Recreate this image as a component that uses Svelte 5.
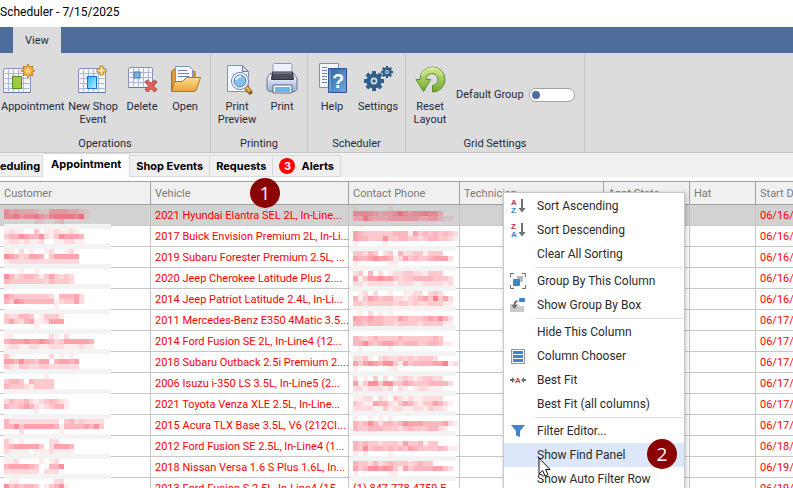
<script>
  let defaultGroup = false

  const columns = ['Customer', 'Vehicle', 'Contact Phone', 'Technician', 'Appt State', 'Hat', 'Start Date']

  const rows = [
    { vehicle: '2021 Hyundai Elantra SEL 2L, In-Line...', start: '06/16/2025' },
    { vehicle: '2017 Buick Envision Premium 2L, In-Li...', start: '06/16/2025' },
    { vehicle: '2019 Subaru Forester Premium 2.5L, ...', start: '06/16/2025' },
    { vehicle: '2020 Jeep Cherokee Latitude Plus 2....', start: '06/16/2025' },
    { vehicle: '2014 Jeep Patriot Latitude 2.4L, In-Li...', start: '06/16/2025' },
    { vehicle: '2011 Mercedes-Benz E350 4Matic 3.5...', start: '06/17/2025' },
    { vehicle: '2014 Ford Fusion SE 2L, In-Line4 (12...', start: '06/17/2025' },
    { vehicle: '2018 Subaru Outback 2.5i Premium 2....', start: '06/17/2025' },
    { vehicle: '2006 Isuzu i-350 LS 3.5L, In-Line5 (2...', start: '06/17/2025' },
    { vehicle: '2021 Toyota Venza XLE 2.5L, In-Line...', start: '06/17/2025' },
    { vehicle: '2015 Acura TLX Base 3.5L, V6 (212CI...', start: '06/17/2025' },
    { vehicle: '2012 Ford Fusion SE 2.5L, In-Line4 (1...', start: '06/18/2025' },
    { vehicle: '2018 Nissan Versa 1.6 S Plus 1.6L, In...', start: '06/19/2025' },
    { vehicle: '2013 Ford Fusion S 2.5L, In-Line4 (15...', phone: '(1) 847-778-4759 E...', start: '06/19/2025' }
  ]

  // redaction strips, 5px blocks: digit = strength, "b" = grey band
  const nameMask = [
    '53433321144443321', '55645564356666571', '......11..12', 'b',
    '1211..3.1121121', '3446544621365554', '1221211200112211', 'b',
    '11.2.1..12..12', '65423554.355555', '122222222222222', 'b',
    '...1..1', '64234431353232', '43333333243332', 'b',
    '', '5433333332.44452', '4365444444123352', '..........1', 'b',
    '322443.13331', '353245112555', '......1', 'b',
    '11.......21.2', '455565565423555554', '122112211222111211', 'b',
    '31.......2.1.1', '554644355.45545', '321332233222222', 'b',
    '........1', '3443.43333', '4333213333', 'b',
    '', '2433421234321', '4334542123441', '......1', 'b',
    '42222222222.34232222', '44635555554144445463', '...2.......1', 'b',
    '31.1.....22', '34555553.25554', '21111011121111', 'b',
    '112....1.12', '4555543..446', '22222220222', 'b',
    '.11.......22', '6343443.13461'
  ]
  const phoneMask = [
    '1......1', '555543445754556553', '33643334444443344211', '', '',
    '543333334441534343432', '544333633443323443321', '1.....1', 'b',
    '33243.23.422331333', '54456554125343345552', '1......11', 'b',
    '23.4.2.12233221333', '51355655323344443332', '22122222122211222212', 'b',
    '.12.2..1..1122.232', '41354344221234537352', '33233333233232233311', 'b',
    '.1.2.1.1', '54454433354333454642', '44344433233332333311', 'b',
    '', '432343333433333343', '44643455434443344311', '.1.....1', 'b',
    '2231.232232323332', '535654663153444455712', '1......11', 'b',
    '2.1.3.2.1232123322', '51366366335433344442', '22122212.21.122111', 'b',
    '1122.21.3212112222', '32115442135421335421', '2222113122112213221', 'b',
    '1..1.1.1', '434642443465554444521', '4334443332343334421', 'b',
    '', '43433233325334133', '436344343435433334311', '1.1....1', 'b',
    '4332423433323433', '53466565315344445532', '1......11', 'b'
  ]

  const menu = [
    { text: 'Sort Ascending', icon: 'asc' },
    { text: 'Sort Descending', icon: 'desc' },
    { text: 'Clear All Sorting' },
    { sep: true },
    { text: 'Group By This Column', icon: 'group' },
    { text: 'Show Group By Box', icon: 'box' },
    { sep: true },
    { text: 'Hide This Column' },
    { text: 'Column Chooser', icon: 'chooser' },
    { text: 'Best Fit', icon: 'fit' },
    { text: 'Best Fit (all columns)' },
    { sep: true },
    { text: 'Filter Editor...', icon: 'filter' },
    { text: 'Show Find Panel', active: true },
    { text: 'Show Auto Filter Row' }
  ]

  const teeth = [0, 45, 90, 135, 180, 225, 270, 315]
</script>

{#snippet mask(strips, barX, barWidth, startX)}
  {#each strips as strip, row}
    {#if strip === 'b'}
      <rect x={barX} y={row * 5} width={barWidth} height="5" fill="#f3f3f3" />
    {:else}
      {#each strip.split('') as level, i}
        {#if level > 0}
          <rect x={startX + i * 5} y={row * 5} width="5" height="5" fill="#fa3448" opacity={level * 0.09} />
        {/if}
      {/each}
    {/if}
  {/each}
{/snippet}

{#snippet calendar(x, y, w, h)}
  <rect {x} {y} width={w} height={h} rx="1.5" fill="#f3f5fb" stroke="#8794b8" />
  <path
    d="M{x + 1} {y + 5}h{w - 2} M{x + 1} {y + 10}h{w - 2} M{x + 1} {y + 15}h{w - 2} M{x + 1} {y + 20}h{w - 2} M{x + 5} {y + 1}v{h - 2} M{x + 10} {y + 1}v{h - 2} M{x + 15} {y + 1}v{h - 2} M{x + 20} {y + 1}v{h - 2}"
    stroke="#adb8d6"
    stroke-width="1"
  />
  <path d="M{x} {y + h}h{w}" stroke="#6577a6" />
{/snippet}

{#snippet gear(cx, cy, r, tooth)}
  <g transform="translate({cx} {cy})">
    {#each teeth as angle}
      <rect x={-tooth / 2} y={-r} width={tooth} height={r / 2} rx="0.5" transform="rotate({angle})" fill="#2f5f8c" />
    {/each}
    <circle r={r * 0.55} fill="none" stroke="#2f5f8c" stroke-width={r * 0.42} />
    <circle r={r * 0.17} fill="#2f5f8c" />
  </g>
{/snippet}

<div class="window">
  <div class="title">Scheduler - 7/15/2025</div>

  <nav class="ribbon-tabs">
    <button class="ribbon-tab">View</button>
  </nav>

  <div class="ribbon">
    <section class="group operations">
      <div class="tools">
        <button class="tool first">
          <svg width="32" height="32" viewBox="0 0 32 32">
            {@render calendar(2.5, 5.5, 27, 24)}
            <rect x="11.5" y="13.5" width="9" height="12" fill="#a3c940" stroke="#5a8a28" />
            <path d="M27 1l1.6 3.2 3.4-1.2-1.2 3.3 3 1.5-3 1.5 1.2 3.4-3.4-1.2L27 15l-1.6-3.5-3.4 1.2 1.2-3.4-3.3-1.5 3.3-1.5L22 3l3.4 1.2z" fill="#f7b845" stroke="#c77d1d" />
            <circle cx="27" cy="7.8" r="2" fill="#ffdc85" />
          </svg>
          <span>Appointment</span>
        </button>
        <button class="tool">
          <svg width="32" height="32" viewBox="0 0 32 32">
            <defs>
              <linearGradient id="sky" x1="0" y1="0" x2="1" y2="1">
                <stop offset="0" stop-color="#19b4ff" />
                <stop offset="1" stop-color="#c9efff" />
              </linearGradient>
            </defs>
            {@render calendar(1.5, 5.5, 27, 24)}
            <rect x="10.5" y="13.5" width="9" height="12" fill="url(#sky)" stroke="#1273e0" />
            <path d="M23 3h3v3h3v3h-3v3h-3V9h-3V6h3z" fill="#ffe9a8" stroke="#b87a22" />
          </svg>
          <span>New Shop Event</span>
        </button>
        <button class="tool">
          <svg width="32" height="32" viewBox="0 0 32 32">
            {@render calendar(2.5, 4.5, 24, 20)}
            <rect x="8" y="9" width="6" height="6" fill="#79b3df" stroke="#4778a8" />
            <path d="M19 19l2.5-2 3.5 3.5 3.5-3.5 2.5 2-3.7 4 3.7 3.5-2.5 2.5-3.5-3.5-3.5 3.5-2.5-2.5 3.7-3.5z" fill="#e2635a" stroke="#b33a3d" />
          </svg>
          <span>Delete</span>
        </button>
        <button class="tool">
          <svg width="32" height="32" viewBox="0 0 32 32">
            <defs>
              <linearGradient id="folder" x1="0" y1="0" x2="0" y2="1">
                <stop offset="0" stop-color="#ffdc8c" />
                <stop offset="1" stop-color="#e8a33c" />
              </linearGradient>
            </defs>
            <path d="M2.5 28V8.5l2-2H9l2 2h15v17z" fill="#dc9b3c" stroke="#a66b1b" />
            <path d="M6.5 3.5h14l3 3v18h-17z" fill="#f4f7fd" stroke="#8494b8" />
            <path d="M9 7.5h9 M9 10.5h11 M9 13.5h11" stroke="#6f83b4" />
            <path d="M2.5 28.5l3-10h8l4-4h14l-4 12-1.5 2z" fill="url(#folder)" stroke="#b4741e" />
          </svg>
          <span>Open</span>
        </button>
      </div>
      <div class="caption">Operations</div>
    </section>

    <section class="group printing">
      <div class="tools">
        <button class="tool">
          <svg width="32" height="32" viewBox="0 0 32 32">
            <path d="M6.5 2.5h15l6 6v20h-21z" fill="#f3f6fc" stroke="#8494b8" />
            <path d="M21.5 2.5v6h6z" fill="#cfd9ec" stroke="#6b7da8" />
            <path d="M24 23l5 6" stroke="#8b5a2b" stroke-width="5" stroke-linecap="round" />
            <path d="M25 24l4 4.5" stroke="#f0a850" stroke-width="3" />
            <circle cx="19" cy="18" r="7.5" fill="#85c0ee" stroke="#fff" stroke-width="3" />
            <circle cx="19" cy="18" r="8.5" fill="none" stroke="#6c7ca0" />
            <circle cx="19" cy="18" r="6" fill="none" stroke="#4f7fb8" />
            <path d="M15 17a4.5 4.5 0 0 1 5-3.5" fill="none" stroke="#e4f5ff" stroke-width="2" />
          </svg>
          <span>Print Preview</span>
        </button>
        <button class="tool">
          <svg width="32" height="32" viewBox="0 0 32 32">
            <defs>
              <linearGradient id="printer" x1="0" y1="0" x2="0" y2="1">
                <stop offset="0" stop-color="#ffffff" />
                <stop offset="1" stop-color="#9aabcf" />
              </linearGradient>
            </defs>
            <path d="M4 10.5h24l3 5v11l-2 2H3l-2-2v-11z" fill="url(#printer)" stroke="#65769f" />
            <path d="M7 14V1.5l1-1h17l1 1V14z" fill="#eef2fb" stroke="#8a98bb" />
            <path d="M6.5 9h20l1 7.5h-22z" fill="#4a4e5e" stroke="#30333f" />
            <path d="M7 10h19" stroke="#8e94a8" />
            <path d="M7 22h19v8H7z" fill="#f6f9ff" stroke="#53658f" />
            <path d="M9 24h15v5H9z" fill="#68b6ef" />
          </svg>
          <span>Print</span>
        </button>
      </div>
      <div class="caption">Printing</div>
    </section>

    <section class="group scheduler">
      <div class="tools">
        <button class="tool">
          <svg width="32" height="32" viewBox="0 0 32 32">
            <defs>
              <linearGradient id="book" x1="0" y1="0" x2="1" y2="1">
                <stop offset="0" stop-color="#2f61a6" />
                <stop offset="1" stop-color="#73a8e0" />
              </linearGradient>
            </defs>
            <path d="M3.5.5h19v24h-19z" fill="#f3f6fc" stroke="#7f8fb5" />
            <path d="M6 4.5h5 M6 7.5h5 M6 10.5h5 M6 13.5h5 M6 16.5h5 M6 19.5h5" stroke="#6f83b4" />
            <path d="M12.5 5.5h18v24h-18z" fill="url(#book)" stroke="#2b568f" />
            <path d="M14 6.5v22" stroke="#96bbe5" />
            <text class="question" x="22" y="25" text-anchor="middle">?</text>
          </svg>
          <span>Help</span>
        </button>
        <button class="tool">
          <svg width="32" height="32" viewBox="0 0 32 32">
            {@render gear(12, 18, 10, 4)}
            {@render gear(25, 9, 6, 2.4)}
          </svg>
          <span>Settings</span>
        </button>
      </div>
      <div class="caption">Scheduler</div>
    </section>

    <section class="group grid-settings">
      <div class="tools">
        <button class="tool">
          <svg width="32" height="32" viewBox="0 0 32 32">
            <defs>
              <linearGradient id="leaf" x1="0" y1="0" x2="0" y2="1">
                <stop offset="0" stop-color="#d6ec8e" />
                <stop offset="1" stop-color="#6fa82a" />
              </linearGradient>
            </defs>
            <path
              d="M6 16.5A12.500 12.500 0 1 1 18.500 29v-6.500a6 6 0 1 0-6.500-6h4.500L9.500 28.500 2 16.500z"
              fill="url(#leaf)"
              stroke="#5b8c25"
            />
            <path d="M7.5 13a11 11 0 0 1 21-1" fill="none" stroke="#eff9c5" />
          </svg>
          <span>Reset Layout</span>
        </button>
        <label class="switch">
          Default Group
          <input type="checkbox" bind:checked={defaultGroup} />
        </label>
      </div>
      <div class="caption">Grid Settings</div>
    </section>
  </div>

  <div class="tabs">
    <button class="tab cut">eduling</button>
    <button class="tab selected">Appointment</button>
    <button class="tab">Shop Events</button>
    <button class="tab">Requests</button>
    <button class="tab alerts"><span class="count">3</span>Alerts</button>
  </div>

  <div class="grid">
    <table>
      <colgroup>
        <col class="c-customer" />
        <col class="c-vehicle" />
        <col class="c-phone" />
        <col class="c-tech" />
        <col class="c-state" />
        <col class="c-hat" />
        <col />
      </colgroup>
      <thead>
        <tr>
          {#each columns as column}
            <th>{column}</th>
          {/each}
        </tr>
      </thead>
      <tbody>
        {#each rows as row, i}
          <tr class:current={i === 0}>
            <td></td>
            <td>{row.vehicle}</td>
            <td>{row.phone || ''}</td>
            <td></td>
            <td></td>
            <td></td>
            <td>{row.start}</td>
          </tr>
        {/each}
      </tbody>
    </table>

    <svg class="mask names" width="111" height="290">{@render mask(nameMask, 4, 107, 4)}</svg>
    <svg class="mask phones" width="108" height="290">{@render mask(phoneMask, 0, 106, 3)}</svg>
    <span class="step one">1</span>
  </div>

  <div class="menu" role="menu">
    {#each menu as item}
      {#if item.sep}
        <div class="sep"></div>
      {:else}
        <button class="item" class:active={item.active} role="menuitem">
          <svg width="16" height="16" viewBox="0 0 16 16">
            {#if item.icon === 'asc' || item.icon === 'desc'}
              <text class="letter red" x="1" y="7">{item.icon === 'asc' ? 'A' : 'Z'}</text>
              <text class="letter blue" x="1" y="15">{item.icon === 'asc' ? 'Z' : 'A'}</text>
              <path d="M11 1h2v9h2.5L12 14.500 8.500 10H11z" fill="#6d6e73" />
            {:else if item.icon === 'group'}
              <path d="M.5 4V.5H4M12 .5h3.500V4M15.5 12v3.500H12M4 15.5H.5V12" fill="none" stroke="#6d6e73" />
              <rect x="7" y="3" width="6" height="6" rx="1" fill="#b9b9bb" />
              <rect x="3" y="6" width="7" height="7" rx="1" fill="#3f84cc" />
            {:else if item.icon === 'box'}
              <path d="M0 7h8v2h6v6H0z" fill="#cbcbcd" />
              <rect x="9" y="1" width="6" height="4" rx="1" fill="#3f84cc" />
              <path d="M7.5 4Q4.500 4 4.500 9" fill="none" stroke="#6d6e73" stroke-width="2" />
              <path d="M1.5 8h6l-3 4z" fill="#6d6e73" />
            {:else if item.icon === 'chooser'}
              <rect x="1.5" y="1.5" width="13" height="14" fill="#fff" stroke="#97989b" />
              <path d="M3 4.500h10M3 8.500h10M3 12.500h10" stroke="#3f84cc" stroke-width="3" />
            {:else if item.icon === 'fit'}
              <path d="M0 7h2V5l3 3-3 3V9H0zM16 7h-2V5l-3 3 3 3V9h2z" fill="#6d6e73" />
              <text class="letter red" x="5" y="11">A</text>
            {:else if item.icon === 'filter'}
              <path d="M1 2h14L10 8v6l-4-1.500V8z" fill="#3f84cc" />
            {/if}
          </svg>
          {item.text}
        </button>
      {/if}
    {/each}
    <span class="step two">2</span>
    <svg class="cursor" width="13" height="20" viewBox="0 0 13 20">
      <path d="M1 1v16l3.700-3.500L7 19l3-1.300-2.400-5.200H12z" fill="#fff" stroke="#111" />
    </svg>
  </div>
</div>

<style>
  :global(body) {
    margin: 0;
    background: #fff;
  }

  .window {
    position: relative;
    height: 100vh;
    overflow: hidden;
    display: flex;
    flex-direction: column;
    font-family: Roboto, sans-serif;
    font-size: 11px;
    color: #262b3d;
  }

  button {
    margin: 0;
    padding: 0;
    border: 0;
    background: none;
    font: inherit;
    color: inherit;
  }

  .title {
    flex: none;
    height: 27px;
    line-height: 24px;
    font-size: 12px;
    color: #000;
  }

  .ribbon-tabs {
    flex: none;
    display: flex;
    height: 26px;
    padding-left: 13px;
    background: #4f6d9c;
  }

  .ribbon-tab {
    width: 48px;
    background: #dcdcdc;
  }

  .ribbon {
    flex: none;
    display: flex;
    height: 99px;
    background: #dcdcdc;
    border-bottom: 1px solid #c6c6c6;
  }

  .group {
    box-sizing: border-box;
    display: flex;
    flex-direction: column;
    justify-content: space-between;
    border-right: 1px solid #c6c6c6;
  }

  .operations { width: 211px; }
  .printing { width: 97px; }
  .scheduler { width: 98px; }
  .grid-settings { width: 179px; }

  .tools {
    display: grid;
    justify-content: start;
    padding-top: 10px;
  }

  .operations .tools { grid-template-columns: 64px 58px 40px 46px; }
  .printing .tools { grid-template-columns: 52px 38px; }
  .scheduler .tools { grid-template-columns: 48px 44px; }
  .grid-settings .tools { grid-template-columns: 48px auto; }

  .tool {
    display: flex;
    flex-direction: column;
    align-items: center;
    gap: 5px;
    line-height: 13px;
  }

  .tool.first {
    align-items: flex-start;
    padding-left: 1px;
  }

  .tool svg {
    flex: none;
    overflow: visible;
  }

  .question {
    font-family: 'Liberation Sans', sans-serif;
    font-size: 20px;
    font-weight: bold;
    fill: #fff;
  }

  .switch {
    display: flex;
    align-items: center;
    gap: 5px;
    padding-left: 2px;
  }

  .switch input {
    appearance: none;
    box-sizing: border-box;
    width: 46px;
    height: 14px;
    margin: 0;
    padding: 2px;
    border: 1px solid #a2a2a2;
    border-radius: 7px;
    background: #fff;
  }

  .switch input::before {
    content: '';
    display: block;
    width: 8px;
    height: 8px;
    border-radius: 50%;
    background: #4f6d9c;
  }

  .switch input:checked::before {
    margin-left: auto;
  }

  .caption {
    height: 16px;
    line-height: 16px;
    text-align: center;
  }

  .tabs {
    flex: none;
    display: flex;
    align-items: flex-end;
    height: 24px;
    background: #f0f0f0;
    font-family: Inter, sans-serif;
    font-weight: bold;
    color: #000;
  }

  .tab {
    box-sizing: border-box;
    height: 22px;
    padding: 0 6px;
    border: 1px solid #dadada;
    border-left: 0;
  }

  .tab.cut {
    padding: 0 2px 0 0;
  }

  .tab.selected {
    height: 24px;
    padding: 0 8px 3px;
    border-bottom: 0;
    background: #fff;
  }

  .tab.alerts {
    display: flex;
    align-items: center;
    gap: 6px;
  }

  .count {
    width: 16px;
    line-height: 16px;
    border-radius: 50%;
    background: #f00;
    color: #fff;
    text-align: center;
  }

  .grid {
    position: relative;
    padding-top: 4px;
  }

  table {
    width: 100%;
    table-layout: fixed;
    border-spacing: 0;
  }

  .c-customer { width: 151px; }
  .c-vehicle { width: 198px; }
  .c-phone { width: 111px; }
  .c-tech { width: 144px; }
  .c-state { width: 86px; }
  .c-hat { width: 66px; }

  th,
  td {
    box-sizing: border-box;
    padding: 1px 0 0 4px;
    overflow: hidden;
    white-space: nowrap;
    text-align: left;
    font-weight: normal;
  }

  th {
    height: 24px;
    border: solid #a0a0a0;
    border-width: 1px 1px 1px 0;
    background: #f0f0f0;
    color: #7a7a7a;
  }

  td {
    height: 21px;
    line-height: 19px;
    border: solid #c6c6c6;
    border-width: 0 1px 1px 0;
    color: #f00;
  }

  .current td {
    background: #d2d2d2;
  }

  th:last-child,
  td:last-child {
    border-right: 0;
  }

  .mask {
    position: absolute;
    pointer-events: none;
  }

  .names {
    left: 0;
    top: 32px;
  }

  .phones {
    left: 350px;
    top: 29px;
  }

  .step {
    position: absolute;
    width: 30px;
    line-height: 30px;
    border-radius: 50%;
    background: #8b0000;
    color: #fff;
    font-family: 'Open Sans', sans-serif;
    font-size: 19px;
    text-align: center;
  }

  .one {
    left: 250px;
    top: 1px;
  }

  .menu {
    position: absolute;
    left: 503px;
    top: 192px;
    width: 180px;
    padding-top: 1px;
    border: 1px solid #c8c8c8;
    background: #fff;
    box-shadow: 1px 1px 4px rgba(0, 0, 0, 0.25);
    font-size: 12px;
    color: #2b2b2b;
  }

  .item {
    display: flex;
    align-items: center;
    gap: 11px;
    width: 100%;
    height: 24px;
    padding-left: 6px;
    text-align: left;
    white-space: nowrap;
  }

  .item.active {
    background: #dce7fb;
  }

  .letter {
    font-family: 'Liberation Sans', sans-serif;
    font-size: 8px;
    font-weight: bold;
  }

  .red { fill: #d02f45; }
  .blue { fill: #3f7fc4; }

  .sep {
    height: 1px;
    margin: 1px 1px 1px 31px;
    background: #dedede;
  }

  .two {
    left: 143px;
    top: 246px;
  }

  .cursor {
    position: absolute;
    left: 34px;
    top: 264px;
  }
</style>
